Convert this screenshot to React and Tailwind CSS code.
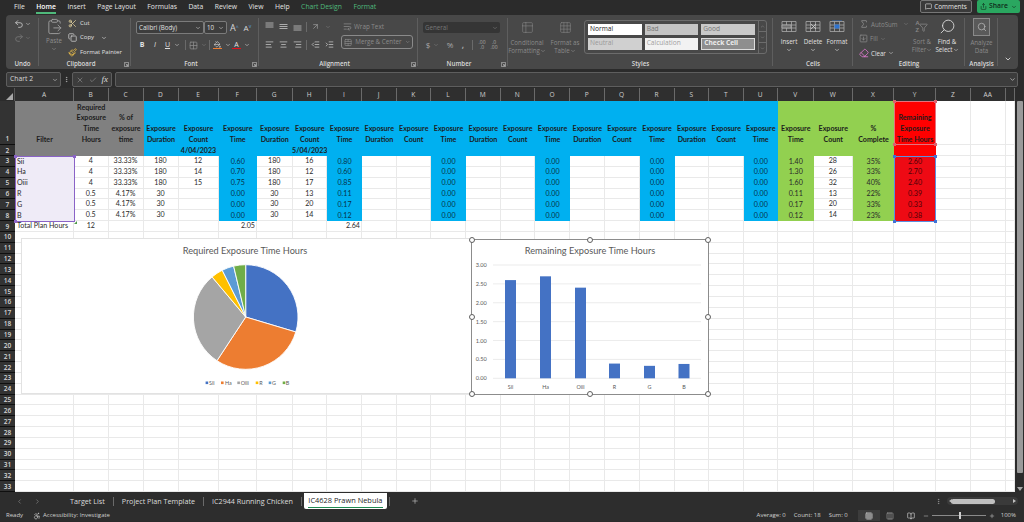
import React from 'react';
import {
  Undo2, Redo2, ChevronDown, ClipboardPaste, Scissors, Copy, Paintbrush, Grid2x2, PaintBucket,
  AlignLeft, AlignCenter, AlignRight, IndentDecrease, IndentIncrease, WrapText, TableCellsMerge,
  Sigma, SquareArrowDown, Eraser, Search, Funnel, X, Check, MessageSquare, Share, ChevronLeft,
  ChevronRight, Plus, Accessibility, Grid3x3, Columns3, BookOpen, Minus, Table2,
  MoreVertical, ArrowUpRight,
} from 'lucide-react';

const UI = 'font-["Open_Sans",sans-serif]';
const CELL = 'font-["Lato","Liberation_Sans",sans-serif]';

const COLS = ['A','B','C','D','E','F','G','H','I','J','K','L','M','N','O','P','Q','R','S','T','U','V','W','X','Y','Z','AA',''];
const BLUE_COLS = ['F','I','L','O','R','U'];
const HEAD_BLUE = ['D','E','F','G','H','I','J','K','L','M','N','O','P','Q','R','S','T','U'];

const zero = ['0.00','0.00','0.00','0.00','0.00','0.00'];
const DATA = {
  A: ['Sii','Ha','Oiii','R','G','B'],
  B: ['4','4','4','0.5','0.5','0.5'],
  C: ['33.33%','33.33%','33.33%','4.17%','4.17%','4.17%'],
  D: ['180','180','180','30','30','30'],
  E: ['12','14','15','','',''],
  F: ['0.60','0.70','0.75','0.00','0.00','0.00'],
  G: ['180','180','180','30','30','30'],
  H: ['16','12','17','13','20','14'],
  I: ['0.80','0.60','0.85','0.11','0.17','0.12'],
  L: zero, O: zero, R: zero, U: zero,
  V: ['1.40','1.30','1.60','0.11','0.17','0.12'],
  W: ['28','26','32','13','20','14'],
  X: ['35%','33%','40%','22%','33%','23%'],
  Y: ['2.60','2.70','2.40','0.39','0.33','0.38'],
};
const HEADERS = {
  A: 'Filter', B: 'Required Exposure Time Hours', C: '% of exposure time',
  V: 'Exposure Time', W: 'Exposure Count', X: '%\nComplete', Y: 'Remaining Exposure Time Hours',
};
const headerFor = (c) => {
  if (HEADERS[c]) return HEADERS[c];
  const i = HEAD_BLUE.indexOf(c);
  if (i < 0) return '';
  return ['Exposure Duration', 'Exposure Count', 'Exposure Time'][i % 3];
};

const fillFor = (c, r) => {
  if (r <= 2) {
    if (c === 'A' || c === 'B' || c === 'C') return 'bg-[#808080]';
    if (HEAD_BLUE.includes(c)) return 'bg-[#00b0f0]';
    if (c === 'V' || c === 'W' || c === 'X') return 'bg-[#92d050]';
    if (c === 'Y') return 'bg-[#ff0000]';
  }
  if (r >= 3 && r <= 8) {
    if (c === 'A') return 'bg-[#efebf7]';
    if (BLUE_COLS.includes(c)) return 'bg-[#00b0f0]';
    if (c === 'V' || c === 'X') return 'bg-[#92d050]';
    if (c === 'Y') return 'bg-[#ee0a14]';
  }
  return 'bg-white border-r border-b border-[#e9e9e9]';
};

const Cell = ({ c, r }) => {
  const fill = fillFor(c, r);
  if (r === 1) {
    return (
      <div className={`${fill} flex items-end justify-center text-center font-bold text-[#1c1c1c] leading-[10.85px]`}>
        <span className="block whitespace-pre-line translate-y-[1px]">{headerFor(c)}</span>
      </div>
    );
  }
  if (r === 2) {
    const date = c === 'E' ? '4/04/2023' : c === 'H' ? '5/04/2023' : '';
    return <div className={`${fill} flex items-center justify-center pt-[2px] font-bold text-[#1c1c1c] whitespace-nowrap`}>{date}</div>;
  }
  let text = '';
  let align = 'justify-center';
  if (r >= 3 && r <= 8 && DATA[c]) {
    text = DATA[c][r - 3];
    if (c === 'A') align = 'justify-start pl-[2px]';
  }
  if (r === 9) {
    if (c === 'A') { text = 'Total Plan Hours'; align = 'justify-start pl-[2px]'; }
    if (c === 'B') text = '12';
    if (c === 'F') { text = '2.05'; align = 'justify-end pr-[1px]'; }
    if (c === 'I') { text = '2.64'; align = 'justify-end pr-[1px]'; }
  }
  const tone = c === 'Y' && r <= 8 ? 'text-[#4a0208]' : BLUE_COLS.includes(c) && r <= 8 ? 'text-[#07334a]' : 'text-[#2a2a2a]';
  return <div className={`${fill} flex items-center pt-[1px] ${align} ${tone} whitespace-nowrap overflow-visible`}>{text}</div>;
};

// excel selection handle
const Grip = ({ className }) => <span className={`absolute w-[3px] h-[3px] ${className}`} />;

const PIE = [
  { name: 'Sii', v: 4, color: '#4472c4', sq: 183.6, tx: 187 },
  { name: 'Ha', v: 4, color: '#ed7d31', sq: 199, tx: 203 },
  { name: 'Oiii', v: 4, color: '#a5a5a5', sq: 215.3, tx: 218.7 },
  { name: 'R', v: 0.5, color: '#ffc000', sq: 233.7, tx: 237.3 },
  { name: 'G', v: 0.5, color: '#5b9bd5', sq: 246.7, tx: 250 },
  { name: 'B', v: 0.5, color: '#70ad47', sq: 260.7, tx: 263.7 },
];

const PieChart = () => {
  const cx = 223.7, cy = 78, rad = 52.3;
  const total = PIE.reduce((a, p) => a + p.v, 0);
  let angle = 0;
  return (
    <svg width="450" height="156" className={CELL}>
      <text x="223" y="15" textAnchor="middle" fontSize="9.2" fill="#595959">Required Exposure Time Hours</text>
      {PIE.map((p) => {
        const a0 = angle;
        angle += (p.v / total) * Math.PI * 2;
        const x0 = cx + rad * Math.sin(a0), y0 = cy - rad * Math.cos(a0);
        const x1 = cx + rad * Math.sin(angle), y1 = cy - rad * Math.cos(angle);
        const large = angle - a0 > Math.PI ? 1 : 0;
        return <path key={p.name} d={`M${cx} ${cy}L${x0} ${y0}A${rad} ${rad} 0 ${large} 1 ${x1} ${y1}Z`} fill={p.color} stroke="#fff" strokeWidth="0.9" />;
      })}
      {PIE.map((p) => (
        <g key={p.name}>
          <rect x={p.sq} y="142.5" width="2.6" height="2.6" fill={p.color} />
          <text x={p.tx} y="146" fontSize="5.4" fill="#595959">{p.name}</text>
        </g>
      ))}
    </svg>
  );
};

const BARS = [
  { name: 'Sii', v: 2.6, x: 34 }, { name: 'Ha', v: 2.7, x: 69 }, { name: 'Oiii', v: 2.4, x: 104 },
  { name: 'R', v: 0.39, x: 138 }, { name: 'G', v: 0.33, x: 173 }, { name: 'B', v: 0.38, x: 207.5 },
];

const BarChart = () => (
  <svg width="238" height="156" className={CELL}>
    <text x="119" y="15" textAnchor="middle" fontSize="9.2" fill="#595959">Remaining Exposure Time Hours</text>
    {[0, 0.5, 1, 1.5, 2, 2.5, 3].map((t) => {
      const y = 139.3 - t * 37.77;
      return (
        <g key={t}>
          <line x1="22" x2="230" y1={y} y2={y} stroke="#e6e6e6" strokeWidth="0.8" />
          <text x="4.7" y={y + 2} fontSize="5.6" fill="#595959">{t.toFixed(2)}</text>
        </g>
      );
    })}
    {BARS.map((b) => (
      <g key={b.name}>
        <rect x={b.x} y={139.3 - b.v * 37.77} width="11" height={b.v * 37.77} fill="#4472c4" />
        <text x={b.x + 5.5} y="150" textAnchor="middle" fontSize="5.4" fill="#595959">{b.name}</text>
      </g>
    ))}
  </svg>
);

const HANDLES = [
  '-left-[3px] -top-[3px]', 'left-1/2 -ml-[3px] -top-[3px]', '-right-[3px] -top-[3px]',
  '-left-[3px] top-1/2 -mt-[3px]', '-right-[3px] top-1/2 -mt-[3px]',
  '-left-[3px] -bottom-[3px]', 'left-1/2 -ml-[3px] -bottom-[3px]', '-right-[3px] -bottom-[3px]',
];

const Sheet = () => (
  <div className="flex h-[404px]">
    <div className={`relative w-[1015px] overflow-hidden bg-white text-[7.1px] ${CELL} grid grid-cols-[15px_59px_34.5px_35px_35px_40px_38.5px_35.5px_34.5px_35px_34.5px_34.5px_35px_34.5px_34.5px_35px_34.5px_35px_35px_34.5px_34.5px_34.5px_35.5px_39.5px_41px_42px_35px_34.5px_9.5px] grid-rows-[13px_44px_11px_repeat(31,10.85px)]`}>
      <div className="bg-[#2b2b2b] border-r border-[#555] relative">
        <span className="absolute right-[1px] bottom-[1px] w-0 h-0 border-l-[7px] border-l-transparent border-b-[7px] border-b-[#a8a8a8]" />
      </div>
      {COLS.map((c, i) => (
        <div key={i} className={`bg-[#2f2f2f] border-r border-[#6a6a6a] flex items-center justify-center pt-[1px] text-[#cfcfcf] text-[6.6px] ${UI}`}>{c}</div>
      ))}
      {Array.from({ length: 33 }, (_, i) => i + 1).map((r) => (
        <React.Fragment key={r}>
          <div className={`bg-[#333333] border-b border-[#0f0f0f] flex ${r === 1 ? 'items-end' : 'items-center pt-[1px]'} justify-center text-[#d6d6d6] text-[6.6px] font-semibold ${UI}`}>{r}</div>
          {COLS.map((c, j) => <Cell key={j} c={c} r={r} />)}
        </React.Fragment>
      ))}

      {/* selected ranges */}
      <div className="absolute left-[15px] top-[68px] w-[59.5px] h-[65.5px] border-[1.5px] border-[#8a63c7] pointer-events-none">
        <Grip className="-left-[2px] -top-[2px] bg-[#8a63c7]" />
        <Grip className="-right-[2px] -top-[2px] bg-[#8a63c7]" />
        <Grip className="-left-[2px] -bottom-[2px] bg-[#8a63c7]" />
        <span className="absolute -right-[3px] -bottom-[3px] border-l-[3px] border-l-transparent border-b-[3px] border-b-[#4f9a4a]" />
      </div>
      <div className="absolute left-[894px] top-[13px] w-[42px] h-[44px] border border-[#e3727f] pointer-events-none">
        <Grip className="-left-[2px] -top-[2px] bg-[#d9616f]" />
        <Grip className="-right-[2px] -top-[2px] bg-[#d9616f]" />
        <Grip className="-left-[2px] -bottom-[2px] bg-[#d9616f]" />
        <Grip className="-right-[2px] -bottom-[2px] bg-[#d9616f]" />
      </div>
      <div className="absolute left-[894px] top-[68px] w-[42px] h-[65.5px] border border-[#5b8fe0] pointer-events-none">
        <Grip className="-left-[2px] -top-[2px] bg-[#3f73d6]" />
        <Grip className="-right-[2px] -top-[2px] bg-[#3f73d6]" />
        <Grip className="-left-[2px] -bottom-[2px] bg-[#3f73d6]" />
        <Grip className="-right-[2px] -bottom-[2px] bg-[#3f73d6]" />
      </div>

      {/* charts float above the cells */}
      <div className="absolute left-[21px] top-[150px] w-[450px] h-[156px] bg-white border-t border-b border-l border-[#e2e2e2]">
        <PieChart />
      </div>
      <div className="absolute left-[471px] top-[151px] w-[238px] h-[156px] bg-white border border-[#8c8c8c]">
        <div className="-m-[1px]"><BarChart /></div>
        {HANDLES.map((h) => (
          <span key={h} className={`absolute w-[6px] h-[6px] rounded-full bg-white border border-[#5f5f5f] ${h}`} />
        ))}
      </div>
    </div>

    <div className="w-[9px] bg-[#2b2b2b] flex flex-col pl-[2px] pr-[1px]">
      <div className="h-[13px]" />
      <div className="h-[372px] bg-[#9a9a9a] rounded-[1px]" />
      <div className="flex-1 flex items-end justify-center pb-[1px]">
        <span className="w-0 h-0 border-l-[3px] border-r-[3px] border-t-[4px] border-l-transparent border-r-transparent border-t-[#a8a8a8]" />
      </div>
    </div>
  </div>
);

const Caret = ({ className = 'text-[#c9c9c9]', size = 6 }) => <ChevronDown size={size} strokeWidth={2.4} className={className} />;

const Launcher = () => (
  <svg width="5" height="5" viewBox="0 0 6 6" className="absolute right-[2px] bottom-[2px]">
    <path d="M.5 .5H5.5V5.5H.5ZM2 2L4.5 4.5M4.5 2.5V4.5H2.5" fill="none" stroke="#bdbdbd" strokeWidth=".8" />
  </svg>
);

const Group = ({ w, label, launcher, children }) => (
  <div className={`${w} relative flex flex-col h-full`}>
    <div className="flex-1 min-h-0 flex">{children}</div>
    <div className={`h-[11px] flex items-center justify-center text-[6.2px] font-semibold text-[#d8d8d8] ${launcher ? 'pr-[8px]' : ''}`}>{label}</div>
    {launcher && <Launcher />}
    <span className="absolute right-0 top-[3px] bottom-[3px] w-px bg-[#5e5e5e]" />
  </div>
);

// vertical alignment glyphs: three short lines pushed up, centred or down
const VAlign = ({ ys }) => (
  <svg width="9" height="9" viewBox="0 0 9 9" stroke="#c8c8c8" strokeWidth=".8">
    {ys.map((y) => <line key={y} x1="0.5" x2="8.5" y1={y} y2={y} />)}
  </svg>
);

const CellGridIcon = ({ accent }) => (
  <svg width="16" height="13" viewBox="0 0 16 13" fill="none" stroke="#a9a9a9" strokeWidth=".8">
    <path d="M1 1.5H15V11.5H1ZM1 5H15M1 8H15M5.5 1.5V11.5M10.5 1.5V11.5" />
    {accent === 'insert' && <path d="M1 5H10V8H1Z" fill="#707070" />}
    {accent === 'delete' && <path d="M6 4L11 9M11 4L6 9" stroke="#d0d0d0" />}
    {accent === 'format' && <path d="M5.5 4.5H10.5V8.5H5.5Z" fill="#2f74d0" stroke="none" />}
    {accent === 'format' && <path d="M3 0H13" stroke="#2f74d0" />}
  </svg>
);

const STYLES = [
  { t: 'Normal', c: 'bg-white text-[#222]' },
  { t: 'Bad', c: 'bg-[#c4c4c4] text-[#777]' },
  { t: 'Good', c: 'bg-[#c9c9c9] text-[#777]' },
  { t: 'Neutral', c: 'bg-[#d0d0d0] text-[#999]' },
  { t: 'Calculation', c: 'bg-[#f2f2f2] text-[#a0a0a0]' },
  { t: 'Check Cell', c: 'bg-[#8e8e8e] text-[#ececec] font-bold border border-[#ddd]' },
];

const MENU = [
  ['File', 'text-[#e4e4e4]'], ['Home', 'text-white font-semibold'], ['Insert', 'text-[#e4e4e4]'],
  ['Page Layout', 'text-[#e4e4e4]'], ['Formulas', 'text-[#e4e4e4]'], ['Data', 'text-[#e4e4e4]'],
  ['Review', 'text-[#e4e4e4]'], ['View', 'text-[#e4e4e4]'], ['Help', 'text-[#e4e4e4]'],
  ['Chart Design', 'text-[#4fb97b]'], ['Format', 'text-[#4fb97b]'],
];

const Menu = () => (
  <div className={`h-[15px] pl-[14px] pr-[4px] flex items-start justify-between text-[6.8px] ${UI}`}>
    <div className="flex gap-[11.5px] pt-[2px]">
      {MENU.map(([m, c]) => (
        <div key={m} className={`relative ${c} leading-[10px]`}>
          {m}
          {m === 'Home' && <span className="absolute left-0 right-0 top-[10px] h-[1.5px] bg-[#4fb97b]" />}
        </div>
      ))}
    </div>
    <div className="flex gap-[5px] pt-[0px]">
      <div className="w-[52px] h-[13px] rounded-[2px] border border-[#777] bg-[#3a3a3a] flex items-center justify-center gap-[2px] text-[#e6e6e6] text-[6.4px]">
        <MessageSquare size={7} />Comments
      </div>
      <div className="w-[43px] h-[13px] rounded-[2px] bg-[#2aa760] flex items-center justify-center gap-[2px] text-[#0f2a1a] text-[6.8px] font-semibold">
        <Share size={7} />Share<Caret className="text-[#0f2a1a] ml-[1px]" />
      </div>
    </div>
  </div>
);

const Ribbon = () => (
  <div className={`h-[54px] mx-[6px] rounded-[4px] bg-[#484848] flex text-[6.2px] text-[#e0e0e0] ${UI}`}>
    <Group w="w-[33px]" label="Undo">
      <div className="flex flex-col gap-[4px] pl-[8px] pt-[4px]">
        <div className="flex items-center gap-[1px]"><Undo2 size={10} className="text-[#c8c8c8]" /><Caret /></div>
        <div className="flex items-center gap-[1px]"><Redo2 size={10} className="text-[#777]" /><Caret className="text-[#777]" /></div>
      </div>
    </Group>

    <Group w="w-[92px]" label="Clipboard" launcher>
      <div className="w-[28px] flex flex-col items-center pl-[2px] pt-[3px] text-[#8f8f8f]">
        <ClipboardPaste size={17} strokeWidth={1.3} className="text-[#a0a0a0]" />
        <span className="mt-[2px] leading-[8px]">Paste</span>
        <Caret className="text-[#8f8f8f] mt-[1px]" />
      </div>
      <div className="flex flex-col gap-[5.5px] pl-[1px] pt-[3.5px] text-[6px] leading-[9px]">
        <div className="flex items-center gap-[3px]"><Scissors size={9} className="text-[#e8d7a0]" />Cut</div>
        <div className="flex items-center gap-[3px]"><Copy size={9} className="text-[#d0d0d0]" />Copy<Caret className="ml-[4px]" /></div>
        <div className="flex items-center gap-[3px] whitespace-nowrap"><Paintbrush size={9} className="text-[#f0c24a]" />Format Painter</div>
      </div>
    </Group>

    <Group w="w-[128px]" label="Font" launcher>
      <div className="flex flex-col pl-[5px] pt-[6px] gap-[5px]">
        <div className="flex items-center">
          <div className="w-[68px] h-[13px] rounded-[2px] border border-[#7b7b7b] bg-[#3d3d3d] flex items-center justify-between px-[2px]">Calibri (Body)<Caret /></div>
          <div className="w-[23px] h-[13px] rounded-[2px] border border-[#7b7b7b] bg-[#3d3d3d] flex items-center justify-between px-[2px]">10<Caret /></div>
          <span className="ml-[3px] text-[9px] text-[#d8d8d8]">A<sup className="text-[#5ba4dc] text-[5px]">^</sup></span>
          <span className="ml-[5px] text-[8px] text-[#d8d8d8]">A<sup className="text-[#5ba4dc] text-[5px]">v</sup></span>
        </div>
        <div className="flex items-center h-[11px] text-[7px]">
          <b className="w-[12px] text-center">B</b>
          <i className="w-[14px] text-center">I</i>
          <span className="w-[21px] flex items-center justify-center gap-[4px]"><u>U</u><Caret /></span>
          <span className="w-px h-[10px] bg-[#6a6a6a] mx-[2px]" />
          <span className="w-[19px] flex items-center justify-center gap-[3px]"><Grid2x2 size={9} className="text-[#8e8e8e]" /><Caret className="text-[#777]" /></span>
          <span className="w-px h-[10px] bg-[#6a6a6a] mx-[2px]" />
          <span className="w-[19px] flex items-center justify-center gap-[3px]">
            <span className="flex flex-col items-center"><PaintBucket size={7} className="text-[#ddd]" /><span className="w-[9px] h-[1.5px] bg-[#ed7d31]" /></span><Caret />
          </span>
          <span className="w-[20px] flex items-center justify-center gap-[3px]">
            <span className="flex flex-col items-center leading-[7px]">A<span className="w-[9px] h-[1.5px] bg-[#e3101c]" /></span><Caret />
          </span>
        </div>
      </div>
    </Group>

    <Group w="w-[159px]" label="Alignment" launcher>
      <div className="w-[82px] flex flex-col pl-[5.5px] pt-[7px] gap-[9px]">
        <div className="flex items-center gap-[5px] h-[9px]">
          <VAlign ys={[1, 3, 5]} /><VAlign ys={[2.5, 4.5, 6.5]} /><VAlign ys={[4, 6, 8]} />
          <span className="w-px h-[10px] bg-[#6a6a6a] -mx-[1px]" />
          <ArrowUpRight size={9} className="text-[#9a9a9a]" /><Caret className="text-[#777]" />
        </div>
        <div className="flex items-center gap-[5px] h-[9px]">
          <AlignLeft size={9} className="text-[#c8c8c8]" /><AlignCenter size={9} className="text-[#c8c8c8]" /><AlignRight size={9} className="text-[#c8c8c8]" />
          <span className="w-px h-[10px] bg-[#6a6a6a] -mx-[1px]" />
          <IndentDecrease size={9} className="text-[#c8c8c8]" /><IndentIncrease size={9} className="text-[#c8c8c8]" />
        </div>
      </div>
      <div className="flex flex-col pt-[6px] gap-[3px] text-[#8a8a8a] text-[6.3px] whitespace-nowrap">
        <div className="flex items-center gap-[2px] h-[11px] pl-[2px]"><WrapText size={9} />Wrap Text</div>
        <div className="w-[72px] h-[14px] rounded-[3px] border border-[#8a8a8a] flex items-center gap-[3px] px-[2px]"><TableCellsMerge size={9} />Merge &amp; Center<Caret className="text-[#8a8a8a] ml-auto" /></div>
      </div>
    </Group>

    <Group w="w-[90px]" label="Number" launcher>
      <div className="flex flex-col pl-[5px] pt-[7px] gap-[6px] w-full text-[#8a8a8a]">
        <div className="w-[77px] h-[11px] rounded-[2px] bg-[#353535] flex items-center justify-between px-[2px] text-[#777]">General<Caret className="text-[#777]" /></div>
        <div className="flex items-center h-[11px] text-[8px] text-[#a8a8a8]">
          <span className="w-[10px] text-center">$</span>
          <Caret className="text-[#777]" />
          <span className="w-[10px] ml-[6px] text-center">%</span>
          <span className="w-[6px] ml-[5px] text-center font-bold">,</span>
          <span className="w-px h-[10px] ml-[6px] bg-[#6a6a6a]" />
          <span className="text-[5px] leading-[5px] w-[12px] ml-[3px] text-center">.00<br />.0</span>
          <span className="text-[5px] leading-[5px] w-[12px] text-center">.0<br />.00</span>
        </div>
      </div>
    </Group>

    <Group w="w-[265px]" label="Styles">
      <div className="w-[38px] flex flex-col items-center pt-[6px] text-[#8a8a8a] leading-[8px] text-center whitespace-nowrap">
        <Table2 size={13} strokeWidth={1} className="mb-[5px]" />
        Conditional
        <span className="flex items-center">Formatting<Caret className="text-[#8a8a8a]" /></span>
      </div>
      <div className="w-[38px] flex flex-col items-center pt-[6px] text-[#8a8a8a] leading-[8px] text-center whitespace-nowrap">
        <Grid3x3 size={13} strokeWidth={1} className="mb-[5px]" />
        Format as
        <span className="flex items-center">Table<Caret className="text-[#8a8a8a]" /></span>
      </div>
      <div className="w-[183px] h-[34px] mt-[5px] rounded-[3px] border border-[#6c6c6c] flex">
        <div className="flex-1 grid grid-cols-3 gap-x-[3px] gap-y-[3px] p-[3px] text-[6.6px]">
          {STYLES.map((s) => (
            <div key={s.t} className={`${s.c} flex items-center pl-[2px] leading-none whitespace-nowrap overflow-hidden`}>{s.t}</div>
          ))}
        </div>
        <div className="w-[8px] flex flex-col border-l border-[#6c6c6c] text-[#9a9a9a]">
          <span className="flex-1 flex items-center justify-center border-b border-[#6c6c6c]"><ChevronDown size={5} className="rotate-180" /></span>
          <span className="flex-1 flex items-center justify-center border-b border-[#6c6c6c]"><ChevronDown size={5} /></span>
          <span className="flex-1 flex items-center justify-center"><ChevronDown size={5} /></span>
        </div>
      </div>
    </Group>

    <Group w="w-[80px]" label="Cells">
      {[['Insert', 'insert'], ['Delete', 'delete'], ['Format', 'format']].map(([t, a]) => (
        <div key={t} className="w-[24px] first:ml-[4px] flex flex-col items-center pt-[5px] leading-[8px]">
          <CellGridIcon accent={a} />
          <span className="mt-[5px]">{t}</span>
          <Caret className="mt-[1px]" />
        </div>
      ))}
    </Group>

    <Group w="w-[112px]" label="Editing">
      <div className="w-[56px] flex flex-col pl-[6px] pt-[4px] gap-[5px] leading-[9px] whitespace-nowrap">
        <div className="flex items-center gap-[2px] text-[#8a8a8a]"><Sigma size={10} />AutoSum<Caret className="text-[#777] ml-[3px]" /></div>
        <div className="flex items-center gap-[2px] text-[#8a8a8a]"><SquareArrowDown size={9} />Fill<Caret className="text-[#777]" /></div>
        <div className="flex items-center gap-[2px]"><Eraser size={10} className="text-[#e07ad0]" />Clear<Caret /></div>
      </div>
      <div className="w-[26px] flex flex-col items-center pt-[4px] text-[#8a8a8a] leading-[8px] whitespace-nowrap">
        <div className="flex items-center h-[16px] mb-[3px]">
          <span className="text-[6px] leading-[7px] font-semibold">A<br />Z</span><Funnel size={9} />
        </div>
        Sort &amp;
        <span className="flex items-center">Filter<Caret className="text-[#8a8a8a]" /></span>
      </div>
      <div className="w-[24px] flex flex-col items-center pt-[3px] leading-[8px] whitespace-nowrap">
        <Search size={17} strokeWidth={1.2} className="scale-x-[-1] mb-[3px]" />
        Find &amp;
        <span className="flex items-center">Select<Caret /></span>
      </div>
    </Group>

    <Group w="w-[33px]" label="Analysis">
      <div className="w-full flex flex-col items-center pt-[3px] text-[#8a8a8a] leading-[8px] text-center">
        <div className="w-[17px] h-[18px] border border-[#8a8a8a] bg-[#5a5a5a] flex items-center justify-center mb-[3px]">
          <Search size={10} className="text-[#b0b0b0]" />
        </div>
        Analyze
        <span>Data</span>
      </div>
    </Group>

    <div className="flex-1 flex items-end justify-center pb-[6px]"><ChevronDown size={8} strokeWidth={2.6} className="text-[#dcdcdc]" /></div>
  </div>
);

const FormulaBar = () => (
  <div className={`h-[15px] mt-[3px] mb-[1px] mx-[6px] flex items-stretch text-[#d8d8d8] ${UI}`}>
    <div className="w-[55px] rounded-[2px] border border-[#5e5e5e] bg-[#3c3c3c] flex items-center justify-between pl-[3px] pr-[2px] text-[6.8px]">Chart 2<Caret /></div>
    <div className="w-[11px] flex items-center justify-center"><MoreVertical size={7} className="text-[#bdbdbd]" /></div>
    <div className="w-[40px] rounded-[2px] border border-[#5e5e5e] bg-[#3c3c3c] flex items-center justify-between px-[3px]">
      <X size={8} className="text-[#8a8a8a]" /><Check size={8} className="text-[#8a8a8a]" />
      <span className="font-['Liberation_Serif',serif] italic text-[9px] text-[#dcdcdc]">fx</span>
    </div>
    <div className="flex-1 ml-[3px] rounded-[2px] border border-[#5e5e5e] bg-[#3c3c3c] flex items-center justify-end pr-[1px]"><Caret size={7} /></div>
  </div>
);

const TABS = ['Target List', 'Project Plan Template', 'IC2944 Running Chicken'];

const Tabs = () => (
  <div className={`h-[18px] pt-[1px] bg-[#2d2d2d] flex items-start text-[7.2px] text-[#dcdcdc] ${UI}`}>
    <div className="w-[62px] h-[16px] flex items-center pl-[16px] gap-[11px] text-[#8f8f8f]">
      <ChevronLeft size={7} /><ChevronRight size={7} />
    </div>
    <div className="flex items-center h-[16px]">
      {TABS.map((t) => (
        <React.Fragment key={t}>
          <span className="px-[8px] whitespace-nowrap">{t}</span>
          <span className="w-px h-[9px] bg-[#6a6a6a]" />
        </React.Fragment>
      ))}
      <div className="relative ml-[2px] w-[83px] h-[16px] bg-white rounded-b-[2px] flex items-center justify-center text-[7.4px] text-[#1f1f1f] whitespace-nowrap">
        IC4628 Prawn Nebula
        <span className="absolute left-[4px] right-[4px] bottom-[1px] h-[1px] bg-[#1f8a52]" />
      </div>
      <span className="ml-[2px] w-px h-[9px] bg-[#6a6a6a]" />
      <Plus size={8} className="ml-[21px] text-[#bdbdbd]" />
    </div>
    <div className="flex-1 h-[16px] flex items-center justify-end pr-[6px]">
      <MoreVertical size={7} className="text-[#a0a0a0] mr-[5px]" />
      <div className="w-[71px] h-[8px] rounded-full bg-[#3a3a3a] flex items-center justify-between px-[2px]">
        <span className="w-0 h-0 border-y-[2.5px] border-r-[3px] border-y-transparent border-r-[#c0c0c0]" />
        <span className="w-[44px] h-[5px] rounded-full bg-[#c0c0c0] mr-[13px] -ml-[6px]" />
        <span className="w-0 h-0 border-y-[2.5px] border-l-[3px] border-y-transparent border-l-[#c0c0c0]" />
      </div>
    </div>
  </div>
);

const StatusBar = () => (
  <div className={`h-[11px] bg-[#2d2d2d] flex items-center text-[6px] text-[#cfcfcf] ${UI}`}>
    <span className="pl-[6px] w-[33px]">Ready</span>
    <Accessibility size={8} className="text-[#cfcfcf]" />
    <span className="ml-[2px]">Accessibility: Investigate</span>
    <div className="flex-1 flex items-center justify-end pr-[8px] whitespace-nowrap">
      <span>Average: 0</span>
      <span className="ml-[8px]">Count: 18</span>
      <span className="ml-[8px]">Sum: 0</span>
      <span className="ml-[10px] w-[22px] h-[11px] bg-[#3c3c3c] flex items-center justify-center"><Grid3x3 size={8} /></span>
      <Columns3 size={8} className="ml-[6px] text-[#9a9a9a]" />
      <BookOpen size={8} className="ml-[13px] text-[#cfcfcf]" />
      <Minus size={6} className="ml-[8px]" />
      <div className="relative w-[54px] h-px bg-[#8a8a8a] mx-[3px]">
        <span className="absolute left-[27px] -top-[3px] w-[2px] h-[7px] bg-[#d0d0d0]" />
      </div>
      <Plus size={6} />
      <span className="ml-[6px]">100%</span>
    </div>
  </div>
);

export default function App() {
  return (
    <div className="w-[1024px] h-[522px] overflow-hidden flex flex-col bg-[#2b2b2b]">
      <Menu />
      <Ribbon />
      <FormulaBar />
      <Sheet />
      <Tabs />
      <StatusBar />
    </div>
  );
}
